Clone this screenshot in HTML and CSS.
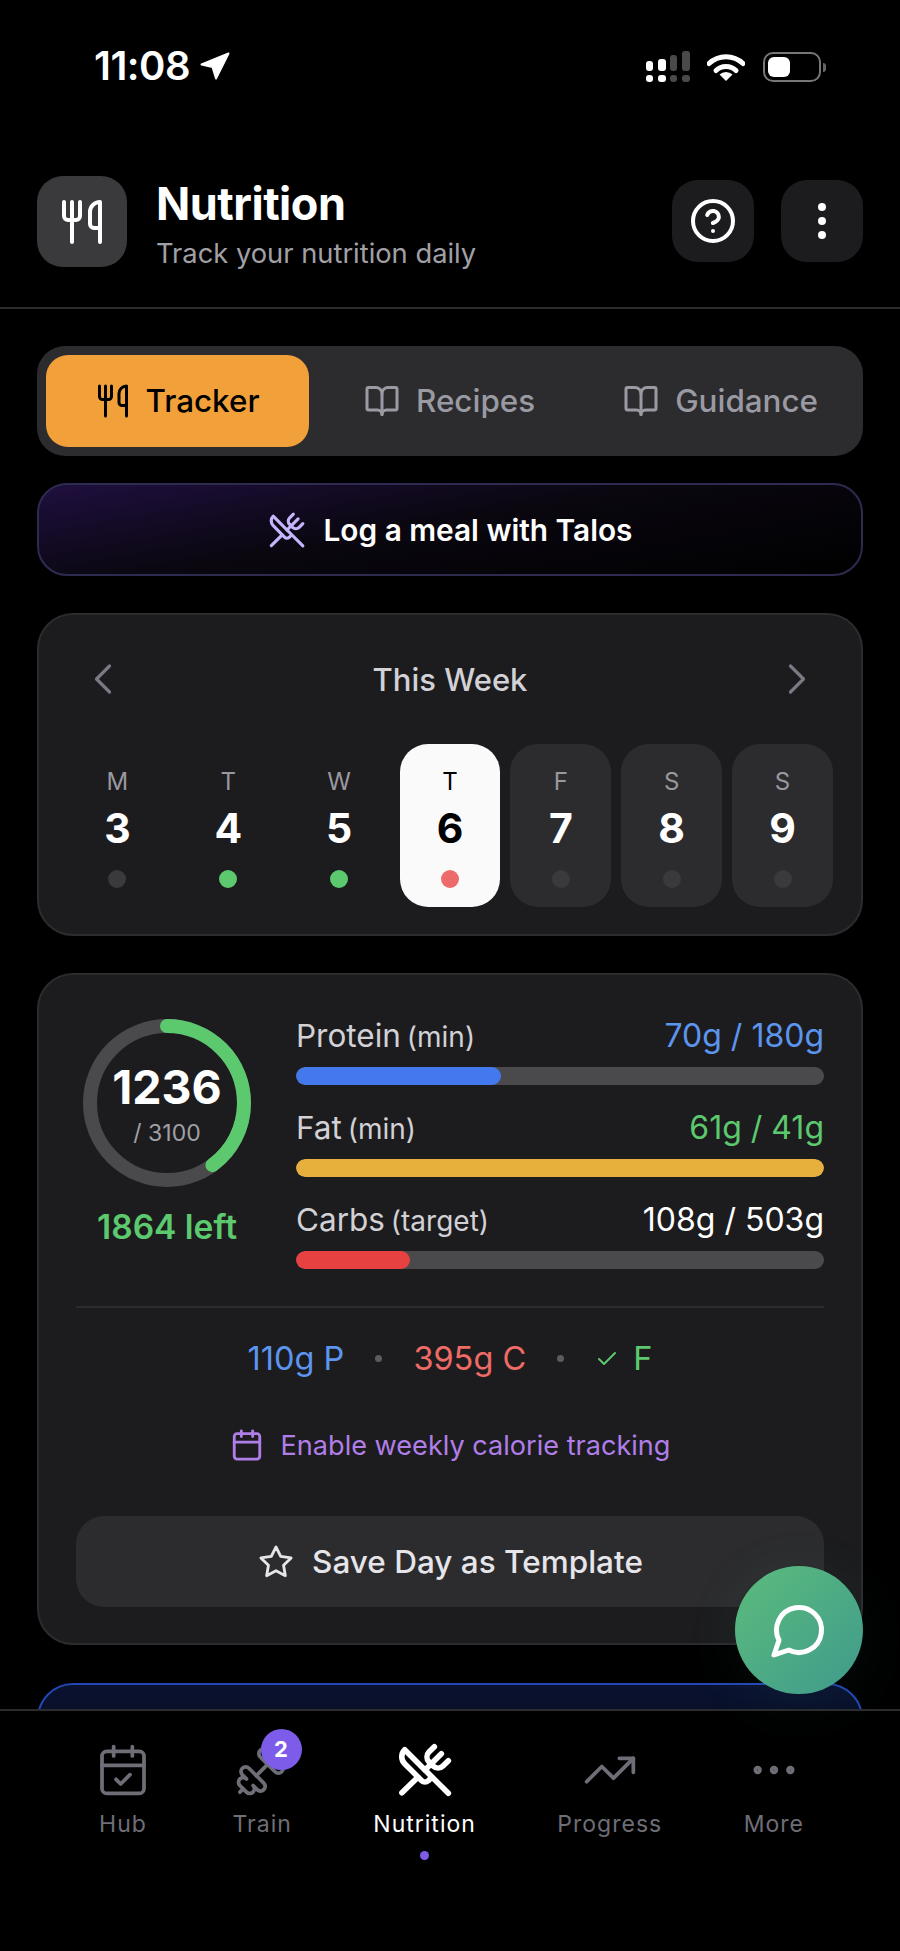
FILE: index.html
```html
<!DOCTYPE html>
<html lang="en">
<head>
  <meta charset="UTF-8" />
  <meta name="viewport" content="width=device-width, initial-scale=1.0" />
  <title>Nutrition</title>
  <link rel="stylesheet" href="styles.css">
</head>
<body>
  <div class="screen">
    <div class="status">
      <div class="status-time">
        <span>11:08</span>
        <svg class="status-arrow" viewBox="0 0 30 28"><path d="M1.5 12.5 28.5 1.5 16 26.5 12.5 15z" fill="#fff" stroke="#fff" stroke-width="2" stroke-linejoin="round"/></svg>
      </div>
      <div class="status-icons">
        <svg class="status-signal" viewBox="0 0 44 32">
          <rect x="0" y="10" width="7" height="10" rx="3" fill="#fff"/>
          <rect x="12" y="8" width="8" height="12" rx="3" fill="#fff"/>
          <rect x="24" y="4" width="7" height="16" rx="3" fill="#4a4a4a"/>
          <rect x="36" y="0" width="8" height="20" rx="3" fill="#4a4a4a"/>
          <rect x="0" y="24" width="7" height="7" rx="3" fill="#fff"/>
          <rect x="12" y="24" width="8" height="7" rx="3" fill="#fff"/>
          <rect x="24" y="24" width="7" height="7" rx="3" fill="#4a4a4a"/>
          <rect x="36" y="24" width="8" height="7" rx="3" fill="#4a4a4a"/>
        </svg>
        <svg class="status-wifi" viewBox="0 0 38 28">
          <path d="M2 10.5a24.5 24.5 0 0 1 34 0" fill="none" stroke="#fff" stroke-width="5" stroke-linecap="round"/>
          <path d="M9 17.5a14.5 14.5 0 0 1 20 0" fill="none" stroke="#fff" stroke-width="5" stroke-linecap="round"/>
          <path d="M12.5 21.5a9.5 9.5 0 0 1 13 0L19 28z" fill="#fff"/>
        </svg>
        <div class="battery"><div class="battery-fill"></div></div>
        <div class="battery-nub"></div>
      </div>
    </div>

    <header class="topbar">
      <div class="topbar-logo">
        <svg class="icon" width="48" height="48" viewBox="0 0 24 24" stroke="#fff" stroke-width="2"><path d="M3 2v7c0 1.1.9 2 2 2h4a2 2 0 0 0 2-2V2"/><path d="M7 2v20"/><path d="M21 15V2a5 5 0 0 0-5 5v6c0 1.1.9 2 2 2h3Zm0 0v7"/></svg>
      </div>
      <div class="topbar-text">
        <h1>Nutrition</h1>
        <p>Track your nutrition daily</p>
      </div>
      <button class="topbar-btn">
        <svg class="icon" width="48" height="48" viewBox="0 0 24 24" stroke="#fff" stroke-width="2"><circle cx="12" cy="12" r="10"/><path d="M9.09 9a3 3 0 0 1 5.83 1c0 2-3 3-3 3"/><path d="M12 17h.01"/></svg>
      </button>
      <button class="topbar-btn">
        <svg class="icon" width="48" height="48" viewBox="0 0 24 24" stroke="#fff" stroke-width="2"><circle cx="12" cy="5" r="1"/><circle cx="12" cy="12" r="1"/><circle cx="12" cy="19" r="1"/></svg>
      </button>
    </header>

    <main class="content">
      <div class="tabs">
        <div class="tab tab-active">
          <svg class="icon" width="36" height="36" viewBox="0 0 24 24" stroke="#000" stroke-width="2"><path d="M3 2v7c0 1.1.9 2 2 2h4a2 2 0 0 0 2-2V2"/><path d="M7 2v20"/><path d="M21 15V2a5 5 0 0 0-5 5v6c0 1.1.9 2 2 2h3Zm0 0v7"/></svg>
          <span>Tracker</span>
        </div>
        <div class="tab tab-recipes">
          <svg class="icon" width="36" height="36" viewBox="0 0 24 24" stroke="#9a9aa3" stroke-width="2"><path d="M12 7v14"/><path d="M3 18a1 1 0 0 1-1-1V4a1 1 0 0 1 1-1h5a4 4 0 0 1 4 4 4 4 0 0 1 4-4h5a1 1 0 0 1 1 1v13a1 1 0 0 1-1 1h-6a3 3 0 0 0-3 3 3 3 0 0 0-3-3z"/></svg>
          <span>Recipes</span>
        </div>
        <div class="tab tab-guidance">
          <svg class="icon" width="36" height="36" viewBox="0 0 24 24" stroke="#9a9aa3" stroke-width="2"><path d="M12 7v14"/><path d="M3 18a1 1 0 0 1-1-1V4a1 1 0 0 1 1-1h5a4 4 0 0 1 4 4 4 4 0 0 1 4-4h5a1 1 0 0 1 1 1v13a1 1 0 0 1-1 1h-6a3 3 0 0 0-3 3 3 3 0 0 0-3-3z"/></svg>
          <span>Guidance</span>
        </div>
      </div>

      <button class="log-meal">
        <svg class="icon" width="38" height="38" viewBox="0 0 24 24" stroke="#c4b5fd" stroke-width="2"><path d="m16 2-2.3 2.3a3 3 0 0 0 0 4.2l1.8 1.8a3 3 0 0 0 4.2 0L22 8"/><path d="M15 15 3.3 3.3a4.2 4.2 0 0 0 0 6l7.3 7.3c.7.7 2 .7 2.8 0L15 15Zm0 0 7 7"/><path d="m2.1 21.8 6.4-6.3"/><path d="m19 5-7 7"/></svg>
        <span>Log a meal with Talos</span>
      </button>

      <section class="card week">
        <div class="week-head">
          <svg class="icon" width="52" height="52" viewBox="0 0 24 24" stroke="#7a7a84" stroke-width="1.5"><path d="m15 18-6-6 6-6"/></svg>
          <h2>This Week</h2>
          <svg class="icon" width="52" height="52" viewBox="0 0 24 24" stroke="#7a7a84" stroke-width="1.5"><path d="m9 18 6-6-6-6"/></svg>
        </div>
        <div class="week-days">
          <div class="day"><span class="day-name">M</span><span class="day-num">3</span><span class="day-dot"></span></div>
          <div class="day"><span class="day-name">T</span><span class="day-num">4</span><span class="day-dot dot-green"></span></div>
          <div class="day"><span class="day-name">W</span><span class="day-num">5</span><span class="day-dot dot-green"></span></div>
          <div class="day day-today"><span class="day-name">T</span><span class="day-num">6</span><span class="day-dot dot-red"></span></div>
          <div class="day day-future"><span class="day-name">F</span><span class="day-num">7</span><span class="day-dot"></span></div>
          <div class="day day-future"><span class="day-name">S</span><span class="day-num">8</span><span class="day-dot"></span></div>
          <div class="day day-future"><span class="day-name">S</span><span class="day-num">9</span><span class="day-dot"></span></div>
        </div>
      </section>

      <section class="card macros">
        <div class="macros-top">
          <div class="calories">
            <div class="ring">
              <svg width="168" height="168" viewBox="0 0 168 168">
                <circle cx="84" cy="84" r="77" fill="none" stroke="#4a4a4c" stroke-width="14"/>
                <circle cx="84" cy="84" r="77" fill="none" stroke="#5cc96e" stroke-width="14" stroke-linecap="round" stroke-dasharray="193 484" transform="rotate(-90 84 84)"/>
              </svg>
              <div class="ring-text">
                <div class="ring-value">1236</div>
                <div class="ring-total">/ 3100</div>
              </div>
            </div>
            <div class="calories-left">1864 left</div>
          </div>
          <div class="bars">
            <div class="macro">
              <div class="macro-head"><span class="macro-name">Protein <small>(min)</small></span><span class="text-blue">70g / 180g</span></div>
              <div class="bar"><div class="bar-fill fill-blue" style="width: 38.9%"></div></div>
            </div>
            <div class="macro">
              <div class="macro-head"><span class="macro-name">Fat <small>(min)</small></span><span class="text-green">61g / 41g</span></div>
              <div class="bar"><div class="bar-fill fill-yellow" style="width: 100%"></div></div>
            </div>
            <div class="macro">
              <div class="macro-head"><span class="macro-name">Carbs <small>(target)</small></span><span class="text-white">108g / 503g</span></div>
              <div class="bar"><div class="bar-fill fill-red" style="width: 21.5%"></div></div>
            </div>
          </div>
        </div>

        <div class="remaining">
          <span class="text-blue">110g P</span>
          <span class="remaining-dot"></span>
          <span class="text-red">395g C</span>
          <span class="remaining-dot"></span>
          <span class="remaining-check text-green">
            <svg class="icon" width="24" height="24" viewBox="0 0 24 24" stroke="#5cc96e" stroke-width="2"><path d="M20 6 9 17l-5-5"/></svg>
            F
          </span>
        </div>

        <div class="weekly-link">
          <svg class="icon" width="34" height="34" viewBox="0 0 24 24" stroke="#b07ee8" stroke-width="2"><path d="M8 2v4"/><path d="M16 2v4"/><rect width="18" height="18" x="3" y="4" rx="2"/><path d="M3 10h18"/></svg>
          <span>Enable weekly calorie tracking</span>
        </div>

        <button class="save-day">
          <svg class="icon" width="38" height="38" viewBox="0 0 24 24" stroke="#e5e5ea" stroke-width="1.8"><path d="M12 2.5l2.95 5.98 6.6.96-4.78 4.65 1.13 6.57L12 17.56l-5.9 3.1 1.13-6.57-4.78-4.65 6.6-.96z"/></svg>
          <span>Save Day as Template</span>
        </button>
      </section>

      <section class="card-next"></section>
    </main>

    <nav class="nav">
      <div class="nav-item nav-hub">
        <svg class="icon" width="56" height="56" viewBox="0 0 24 24" stroke="#6e6e76" stroke-width="1.6"><path d="M8 2v4"/><path d="M16 2v4"/><rect width="18" height="18" x="3" y="4" rx="2"/><path d="M3 10h18"/><path d="m9 16 2 2 4-4"/></svg>
        <span>Hub</span>
      </div>
      <div class="nav-item nav-train">
        <svg class="icon flip" width="56" height="56" viewBox="0 0 24 24" stroke="#6e6e76" stroke-width="1.6"><path d="M14.4 14.4 9.6 9.6"/><path d="M18.657 21.485a2 2 0 1 1-2.829-2.828l-1.767 1.768a2 2 0 1 1-2.829-2.829l6.364-6.364a2 2 0 1 1 2.829 2.829l-1.768 1.767a2 2 0 1 1 2.828 2.829z"/><path d="m21.5 21.5-1.4-1.4"/><path d="M3.9 3.9 2.5 2.5"/><path d="M6.404 12.768a2 2 0 1 1-2.829-2.829l1.768-1.767a2 2 0 1 1-2.828-2.829l2.828-2.828a2 2 0 1 1 2.829 2.828l1.767-1.768a2 2 0 1 1 2.829 2.829z"/></svg>
        <span>Train</span>
        <div class="nav-badge">2</div>
      </div>
      <div class="nav-item nav-active">
        <svg class="icon" width="56" height="56" viewBox="0 0 24 24" stroke="#fff" stroke-width="2.4"><path d="m16 2-2.3 2.3a3 3 0 0 0 0 4.2l1.8 1.8a3 3 0 0 0 4.2 0L22 8"/><path d="M15 15 3.3 3.3a4.2 4.2 0 0 0 0 6l7.3 7.3c.7.7 2 .7 2.8 0L15 15Zm0 0 7 7"/><path d="m2.1 21.8 6.4-6.3"/><path d="m19 5-7 7"/></svg>
        <span>Nutrition</span>
        <div class="nav-dot"></div>
      </div>
      <div class="nav-item">
        <svg class="icon" width="56" height="56" viewBox="0 0 24 24" stroke="#6e6e76" stroke-width="1.6"><path d="M22 7 13.5 15.5 8.5 10.5 2 17"/><path d="M16 7h6v6"/></svg>
        <span>Progress</span>
      </div>
      <div class="nav-item">
        <svg class="icon" width="56" height="56" viewBox="0 0 24 24" stroke="#6e6e76" stroke-width="1.6"><circle cx="12" cy="12" r="1"/><circle cx="19" cy="12" r="1"/><circle cx="5" cy="12" r="1"/></svg>
        <span>More</span>
      </div>
    </nav>

    <button class="fab">
      <svg class="icon" width="60" height="60" viewBox="0 0 24 24" stroke="#fff" stroke-width="2"><path d="M7.9 20A9 9 0 1 0 4 16.1L2 22Z"/></svg>
    </button>
  </div>
</body>
</html>
```

FILE: styles.css
```css
* {
  box-sizing: border-box;
}
body {
  margin: 0;
  background: #000;
  color: #fff;
  font-family: Inter, "Liberation Sans", sans-serif;
}
button {
  font-family: inherit;
  border: none;
  padding: 0;
  color: inherit;
}
.icon {
  display: block;
  flex: none;
  fill: none;
  stroke-linecap: round;
  stroke-linejoin: round;
}
.flip {
  transform: scaleX(-1);
}
.text-blue { color: #5c95ee; }
.text-green { color: #5cc96e; }
.text-red { color: #ee6b66; }
.text-white { color: #fff; }

.screen {
  position: relative;
  width: 900px;
  height: 1951px;
  display: flex;
  flex-direction: column;
  overflow: hidden;
}

/* status bar */
.status {
  height: 176px;
  flex: none;
  padding: 51px 37px 0 94px;
  display: flex;
  justify-content: space-between;
  align-items: flex-start;
}
.status-time {
  display: flex;
  align-items: center;
  gap: 10px;
  font-size: 40px;
  font-weight: 600;
  line-height: 30px;
  letter-spacing: -0.5px;
}
.status-arrow {
  width: 30px;
  height: 28px;
}
.status-icons {
  display: flex;
  align-items: center;
  width: 217px;
  height: 32px;
}
.status-signal {
  width: 44px;
  height: 32px;
  margin-right: 17px;
}
.status-wifi {
  width: 38px;
  height: 28px;
  margin-right: 18px;
}
.battery {
  width: 58px;
  height: 30px;
  border: 2px solid #777;
  border-radius: 10px;
  padding: 3px;
}
.battery-fill {
  width: 22px;
  height: 100%;
  background: #fff;
  border-radius: 6px;
}
.battery-nub {
  width: 3px;
  height: 9px;
  margin-left: 2px;
  background: #666;
  border-radius: 0 3px 3px 0;
}

/* header */
.topbar {
  flex: none;
  height: 133px;
  padding: 0 37px;
  border-bottom: 2px solid #2c2c2e;
  display: flex;
  align-items: flex-start;
}
.topbar-logo {
  width: 90px;
  height: 91px;
  border-radius: 26px;
  background: #3a3a3c;
  display: flex;
  align-items: center;
  justify-content: center;
}
.topbar-text {
  flex: 1;
  margin-left: 29px;
}
.topbar-text h1 {
  margin: 0;
  font-size: 45px;
  line-height: 56px;
  font-weight: 700;
  letter-spacing: -0.5px;
}
.topbar-text p {
  margin: 6px 0 0;
  font-size: 27.3px;
  line-height: 32px;
  color: #a0a0a6;
}
.topbar-btn {
  width: 82px;
  height: 82px;
  margin-top: 4px;
  margin-left: 27px;
  border-radius: 26px;
  background: #1c1c1e;
  display: flex;
  align-items: center;
  justify-content: center;
}

/* scrolling part */
.content {
  flex: 1;
  min-height: 0;
  overflow: hidden;
  padding: 37px 37px 0;
}

.tabs {
  height: 110px;
  padding: 9px;
  border-radius: 28px;
  background: #2c2c2e;
  display: flex;
}
.tab {
  display: flex;
  align-items: center;
  gap: 16px;
  font-size: 31.4px;
  font-weight: 500;
  color: #9a9aa3;
}
.tab-active {
  width: 263px;
  justify-content: center;
  gap: 14px;
  border-radius: 22px;
  background: #f2a03a;
  color: #000;
}
.tab-recipes {
  margin-left: 55px;
}
.tab-guidance {
  margin-left: 88px;
}

.log-meal {
  margin-top: 27px;
  width: 100%;
  height: 93px;
  border: 2px solid #2f2a50;
  border-radius: 30px;
  background: linear-gradient(170deg, #1f0f3f 0%, #0a0710 45%, #000 100%);
  display: flex;
  align-items: center;
  justify-content: center;
  gap: 18px;
  font-size: 29.8px;
  font-weight: 600;
  color: #fff;
}

.card {
  margin-top: 37px;
  background: #1c1c1e;
  border: 2px solid #2c2c2e;
  border-radius: 36px;
}

/* week */
.week {
  height: 323px;
  padding: 47px 28px 0;
}
.week-head {
  height: 36px;
  padding: 0 10px 2px;
  display: flex;
  align-items: center;
  justify-content: space-between;
}
.week-head h2 {
  margin: 0;
  font-size: 31px;
  font-weight: 500;
  color: #d1d1d6;
}
.week-days {
  margin-top: 46px;
  display: grid;
  grid-template-columns: repeat(7, 1fr);
  gap: 10px;
}
.day {
  height: 163px;
  padding-top: 25px;
  border-radius: 28px;
  display: flex;
  flex-direction: column;
  align-items: center;
}
.day-future {
  background: #2c2c2e;
}
.day-today {
  background: #fafafa;
  color: #000;
}
.day-name {
  font-size: 24px;
  line-height: 26px;
  color: #98989e;
}
.day-today .day-name {
  color: #000;
}
.day-num {
  margin-top: 9px;
  font-size: 41px;
  line-height: 48px;
  font-weight: 700;
}
.day-dot {
  margin-top: 18px;
  width: 18px;
  height: 18px;
  border-radius: 50%;
  background: #3a3a3c;
}
.dot-green {
  background: #5cc96e;
}
.dot-red {
  background: #ee6b6b;
}

/* macros */
.macros {
  height: 672px;
  padding: 43px 37px 0;
}
.macros-top {
  display: flex;
  gap: 38px;
  padding-bottom: 37px;
  border-bottom: 2px solid #2c2c2e;
}
.calories {
  width: 182px;
  flex: none;
  padding-top: 1px;
  display: flex;
  flex-direction: column;
  align-items: center;
}
.ring {
  position: relative;
  width: 168px;
  height: 168px;
}
.ring-text {
  position: absolute;
  inset: 0;
  text-align: center;
}
.ring-value {
  margin-top: 42px;
  font-size: 46.5px;
  line-height: 52px;
  font-weight: 700;
}
.ring-total {
  margin-top: 5px;
  font-size: 23px;
  line-height: 30px;
  color: #a0a0a6;
}
.calories-left {
  margin-top: 22px;
  font-size: 33.5px;
  line-height: 36px;
  font-weight: 600;
  color: #5cc96e;
}
.bars {
  flex: 1;
}
.macro + .macro {
  margin-top: 25px;
}
.macro-head {
  display: flex;
  justify-content: space-between;
  font-size: 32px;
  line-height: 35px;
  padding-bottom: 1px;
}
.macro-name {
  color: #d1d1d6;
  font-size: 31.5px;
  word-spacing: -3px;
}
.macro-name small {
  font-size: 28px;
  line-height: 1;
}
.bar {
  margin-top: 13px;
  height: 18px;
  border-radius: 9px;
  background: #4a4a4c;
  overflow: hidden;
}
.bar-fill {
  height: 100%;
  border-radius: 9px;
}
.fill-blue { background: #4479ee; }
.fill-yellow { background: #e7b03c; }
.fill-red { background: #e84141; }

.remaining {
  margin-top: 33px;
  height: 35px;
  display: flex;
  align-items: center;
  justify-content: center;
  gap: 31px;
  font-size: 32.5px;
  line-height: 36px;
}
.remaining-dot {
  width: 7px;
  height: 7px;
  border-radius: 50%;
  background: #5a5a62;
}
.remaining-check {
  display: flex;
  align-items: center;
  gap: 14px;
}
.weekly-link {
  margin-top: 52px;
  height: 34px;
  display: flex;
  align-items: center;
  justify-content: center;
  gap: 17px;
  font-size: 27.1px;
  color: #b07ee8;
}
.save-day {
  margin-top: 54px;
  width: 100%;
  height: 91px;
  border-radius: 28px;
  background: #2c2c2e;
  display: flex;
  align-items: center;
  justify-content: center;
  gap: 17px;
  font-size: 31.5px;
  font-weight: 500;
  color: #e5e5ea;
}

.card-next {
  margin-top: 38px;
  height: 120px;
  border: 2px solid #2447b5;
  border-radius: 36px;
  background: linear-gradient(180deg, #0a1230, #050814);
}

/* bottom nav */
.nav {
  flex: none;
  height: 242px;
  padding: 31px 96px 0 95px;
  background: #000;
  border-top: 2px solid #2c2c2e;
  display: flex;
  justify-content: space-between;
  align-items: flex-start;
}
.nav-item {
  position: relative;
  display: flex;
  flex-direction: column;
  align-items: center;
  font-size: 23px;
  line-height: 28px;
  letter-spacing: 1px;
  color: #6e6e76;
}
.nav-item span {
  margin-top: 12px;
}
.nav-active {
  color: #fff;
}
.nav-badge {
  position: absolute;
  top: -13px;
  left: 28px;
  width: 41px;
  height: 41px;
  border-radius: 50%;
  background: #7c5ce8;
  color: #fff;
  font-size: 22px;
  font-weight: 700;
  line-height: 41px;
  letter-spacing: 0;
  text-align: center;
}
.nav-dot {
  margin-top: 13px;
  width: 9px;
  height: 9px;
  border-radius: 50%;
  background: #7c5ce8;
}

.fab {
  position: absolute;
  right: 37px;
  top: 1566px;
  width: 128px;
  height: 128px;
  border-radius: 50%;
  background: linear-gradient(135deg, #5cbc7c, #3f9a8c);
  box-shadow: 0 8px 60px rgba(60, 170, 140, 0.08);
  display: flex;
  align-items: center;
  justify-content: center;
}
```
